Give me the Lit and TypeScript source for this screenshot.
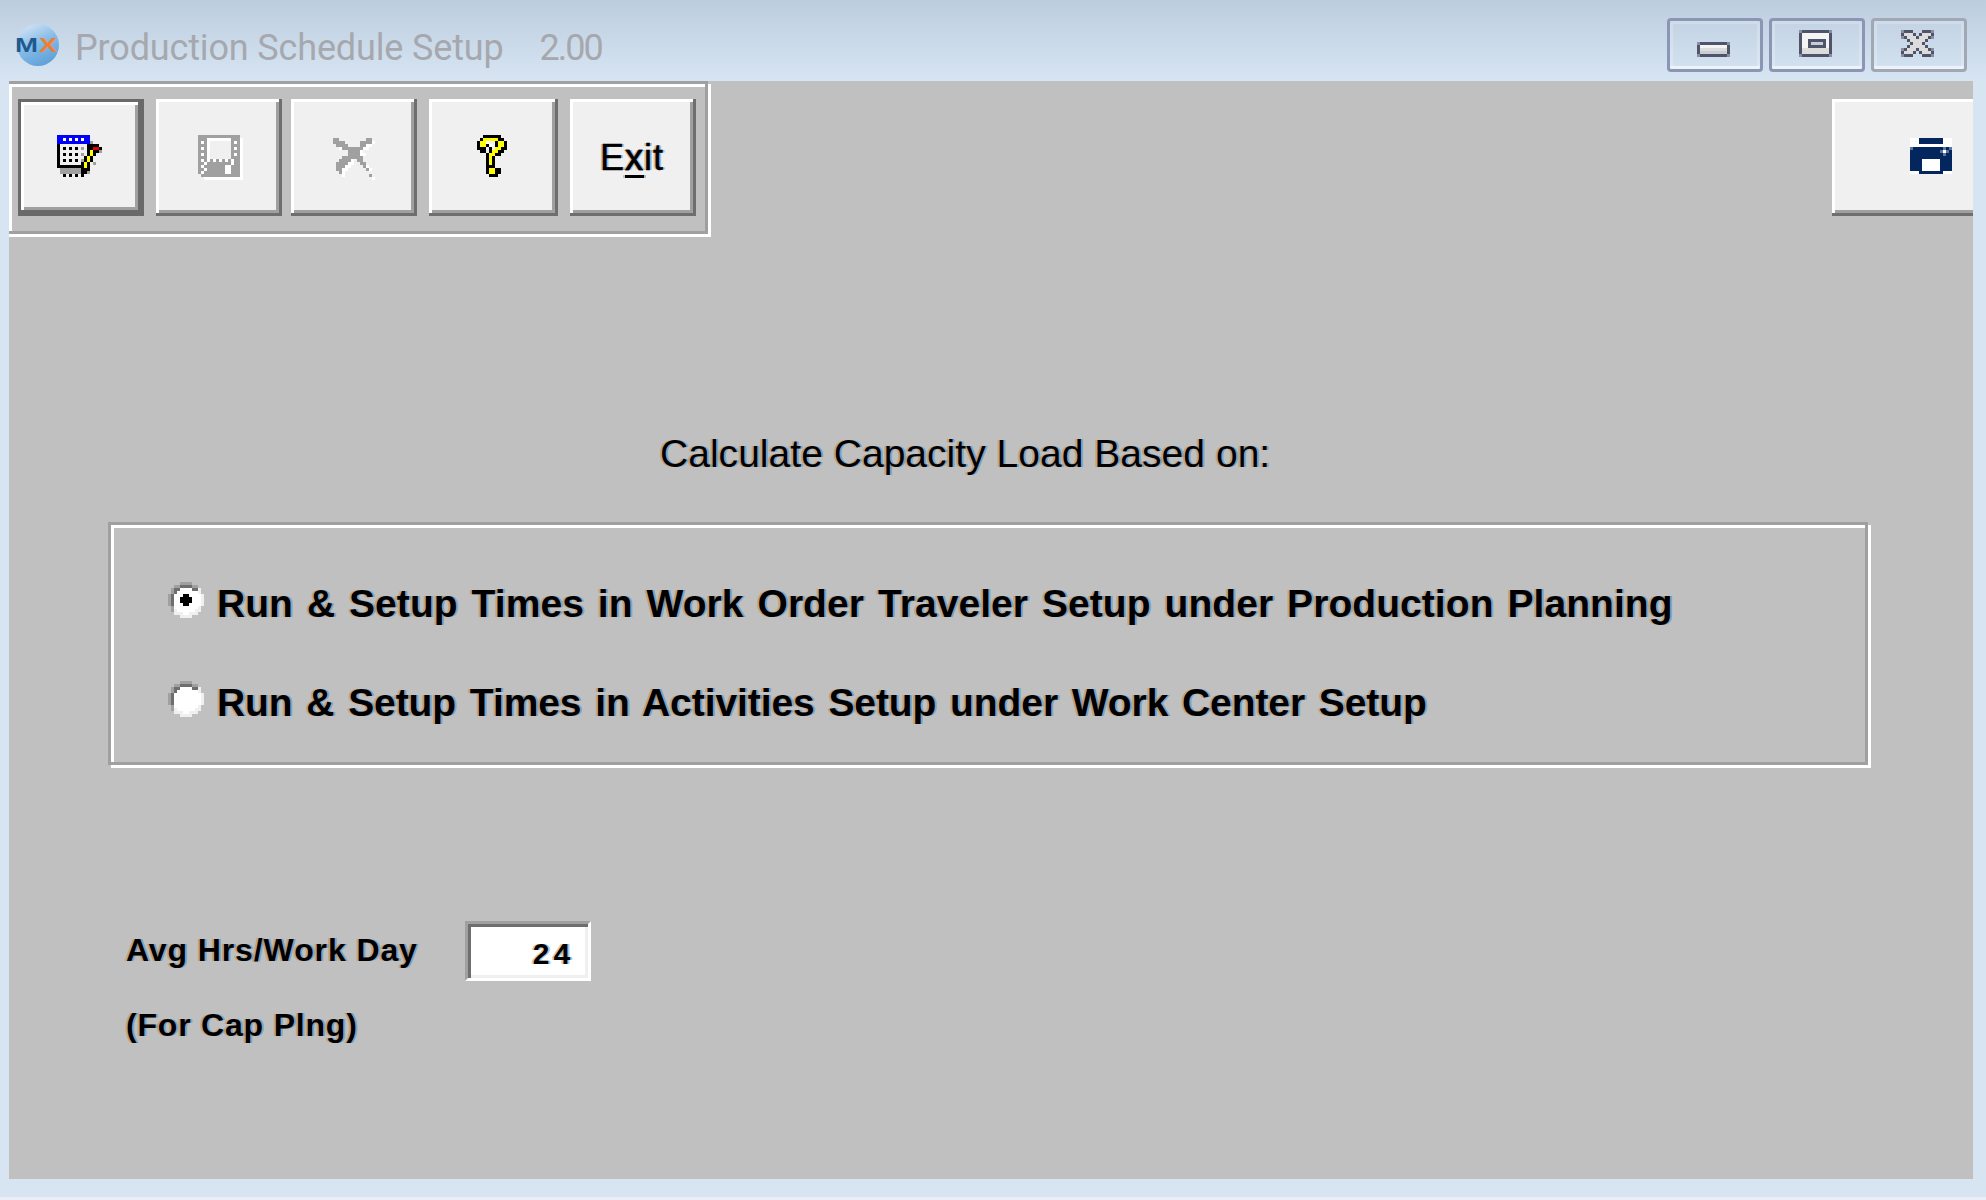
import { LitElement, html, css, svg } from "lit";
import { customElement } from "lit/decorators.js";

// every icon is a 3x upscaled bitmap, so they are stored as rows of pixels
const COLORS: Record<string, string> = {
  b: "#0000ff",
  w: "#ffffff",
  k: "#000000",
  g: "#a0a0a0",
  d: "#6e6e6e",
  l: "#f0f0f0",
  y: "#ffff00",
  r: "#e00000",
  n: "#03265f",
  m: "#5a77a0",
  s: "#50546a",
  e: "#8a8ea0",
  f: "#dcdcdc",
  h: "#f4f4f4",
  j: "#c8ccd4",
};

function pixels(rows: string[]) {
  const w = rows[0].length;
  const h = rows.length;
  const rects = [];
  for (let y = 0; y < h; y++) {
    let x = 0;
    while (x < w) {
      const c = rows[y][x];
      let end = x + 1;
      while (end < w && rows[y][end] === c) end++;
      if (c && c !== ".") {
        rects.push(svg`<rect x=${x} y=${y} width=${end - x} height="1" fill=${COLORS[c]}></rect>`);
      }
      x = end;
    }
  }
  return html`<svg class="px" width=${w * 3} height=${h * 3} viewBox="0 0 ${w} ${h}" shape-rendering="crispEdges">${rects}</svg>`;
}

const EDIT = [
  "bbbbbbbbbbb....",
  "bbwbwbwbwbb....",
  "bbbbbbbbbbbg...",
  "k.........kkkk.",
  "k.k.k.k.g.kkrrk",
  "k.........kykkg",
  "k.k.k.k.g.kyk..",
  "k........kyk...",
  "k.k.k.k.gkyk...",
  "k.......kyk.g..",
  "kkkkkkkkkyk....",
  ".gggggggkkk....",
  ".gggggggkkg....",
  "..k.k.k.k......",
];

const SAVE = [
  "gggggggggggggg.",
  "gggwwwwwwwwgggw",
  "gwgw.......gwgw",
  "gggw.......gggw",
  "gwgw.......gwgw",
  "gggw.......gggw",
  "gwgw.......gwgw",
  "gggw.......gggw",
  "gwgwgwgwgwgwggw",
  "ggwggggggggwggw",
  "gwgggggggwwgggw",
  "ggwggggggwwgggw",
  "gwgggggggwwgggw",
  ".gggggggggggggw",
  "..wwwwwwwwwwwww",
];

const CROSS = [
  "gg.........gg.",
  "gggg.....ggggw",
  ".gggg....ggww.",
  "..wgggggggww..",
  ".....ggggw....",
  ".....ggggww...",
  "...ggggggg....",
  "..ggggw.gg....",
  ".ggggww..gg...",
  ".gggww....gw..",
  ".ggww......gw.",
  "..gw..........",
  "...w........g.",
  ".............w",
];

const HELP = [
  "..kkkkkk..",
  ".kyyyyykk.",
  "kyyw..kyyk",
  "kyykw.kyyk",
  "kkk.k.yykk",
  ".kk.kyykk.",
  "...kyykk..",
  "...kyk....",
  "...kyk....",
  "...kyk....",
  "...kkk....",
  "...kyykk..",
  "...kyykk..",
  "....kkk...",
];

const PRINT = [
  "wwwnnnnnnnnwww",
  "wwwnnnnnnnnwww",
  "wwwwwwwwwwwwww",
  "mnnnnnnnnnnmnm",
  "nnnnnnnnnnmwmn",
  "nnnnnnnnnnnmnn",
  "nnnnnnnnnnnnnn",
  "nnnnwwwwwwnnnn",
  "nnnnwwwwwwnnnn",
  "nnnnwwwwwwnnnn",
  "nnnnwwwwwwnnnn",
  "wwwnnnnnnnnwww",
];

const RADIO_OFF = [
  "....gggg....",
  "..ggddddgg..",
  ".gddwwwwddl.",
  ".gdwwwwwwwl.",
  "gdwwwwwwwwwl",
  "gdwwwwwwwwwl",
  "gdwwwwwwwwwl",
  "gdwwwwwwwwwl",
  ".gwwwwwwwwl.",
  ".glwwwwwwll.",
  "..lllwwlll..",
  "....llll....",
];

const RADIO_ON = [
  "....gggg....",
  "..ggddddgg..",
  ".gddwwwwddl.",
  ".gdwwwwwwwl.",
  "gdwwwkkwwwwl",
  "gdwwkkkkwwwl",
  "gdwwkkkkwwwl",
  "gdwwwkkwwwwl",
  ".gwwwwwwwwl.",
  ".glwwwwwwll.",
  "..lllwwlll..",
  "....llll....",
];

const WIN_MIN = [
  "essssssssse",
  "shhhhhhhhhs",
  "sfffffffffs",
  "sjjjjjjjjjs",
  "essssssssse",
];

const WIN_MAX = [
  "essssssssse",
  "shhhhhhhhhs",
  "shhhhhhhhhs",
  "shhsssssshs",
  "shhsjjjjshs",
  "shhsssssshs",
  "sfffffffffs",
  "sfffffffffs",
  "essssssssse",
];

const WIN_CLOSE = [
  "esss...ssse",
  "sfffs.sfffs",
  "esfffsfffse",
  "..sfffffs..",
  "...sfffs...",
  "..sfffffs..",
  "esfffsfffse",
  "sfffs.sfffs",
  "esss...ssse",
];

@customElement("app-root")
export class AppRoot extends LitElement {
  static styles = css`
    :host {
      display: block;
      width: 1986px;
      height: 1200px;
      background: #d7e4f2;
      font-family: "Liberation Sans", Arial, sans-serif;
      color: #000;
      overflow: hidden;
    }
    .px {
      display: block;
      flex: none;
    }

    .titlebar {
      height: 81px;
      display: flex;
      align-items: flex-start;
      background: linear-gradient(#bccdde, #d7e5f3);
      box-sizing: border-box;
      padding: 0 19px 0 15px;
    }
    .logo {
      margin-top: 23px;
      flex: none;
    }
    .title {
      margin: 26px 0 0 15px;
      font: 400 36px/44px Roboto, sans-serif;
      letter-spacing: -0.15px;
      color: #a6a8ae;
      white-space: pre;
    }
    .version {
      margin-left: 36px;
      letter-spacing: -2px;
    }
    .winbtns {
      margin-left: auto;
      margin-top: 18px;
      display: flex;
      gap: 6px;
    }
    .winbtn {
      width: 96px;
      height: 54px;
      box-sizing: border-box;
      border: 3px solid #8a96b4;
      border-radius: 4px;
      box-shadow: inset 0 -3px 0 rgba(255, 255, 255, 0.5), inset 0 0 0 3px rgba(255, 255, 255, 0.2);
      display: flex;
      justify-content: center;
      align-items: flex-end;
      padding: 0 3px 12px 0;
    }
    .winbtn.off {
      border-color: #a0a8b4;
    }

    .client {
      margin: 0 13px 0 9px;
      height: 1098px;
      background: #c0c0c0;
      overflow: hidden;
    }
    .bottomline {
      margin-top: 18px;
      height: 3px;
      background: #e9eef7;
    }
    .top {
      display: flex;
      justify-content: space-between;
      align-items: flex-start;
    }

    /* toolbar sits half outside the client area, its left groove line is cut off */
    .toolbar {
      margin-left: -3px;
      width: 702px;
      height: 153px;
      box-sizing: border-box;
      border: 3px solid #a0a0a0;
      box-shadow: 3px 3px 0 #fff, inset 3px 3px 0 #fff;
      padding: 15px 0 0 9px;
      display: flex;
    }
    .btn {
      flex: none;
      width: 126px;
      height: 117px;
      box-sizing: border-box;
      background: #f0f0f0;
      box-shadow: inset -3px -3px 0 #6e6e6e, inset 3px 3px 0 #fff, inset -6px -6px 0 #a0a0a0;
      margin-right: 12px;
    }
    .btn.focus {
      box-shadow: inset 0 0 0 3px #696969, inset -6px -6px 0 #696969, inset 6px 6px 0 #fff, inset -9px -9px 0 #a0a0a0;
      padding: 36px 0 0 39px;
    }
    .btn.save {
      padding: 36px 0 0 42px;
      margin-right: 9px;
    }
    .btn.cancel {
      padding: 39px 0 0 42px;
    }
    .btn.help {
      width: 129px;
      padding: 36px 0 0 48px;
    }
    .btn.exit {
      margin-right: 0;
      padding: 41px 0 0 30px;
      font-size: 36px;
      line-height: 36px;
      letter-spacing: 1px;
      -webkit-text-stroke: 0.5px #000;
    }
    .btn.exit u {
      text-decoration-thickness: 3px;
      text-underline-offset: 5px;
    }
    .btn.print {
      width: 160px;
      margin: 18px -19px 0 0;
      padding: 39px 0 0 78px;
    }

    .fringe {
      text-shadow: -2px 0 rgba(190, 130, 60, 0.45), 2px 0 rgba(50, 130, 200, 0.45);
    }
    .heading {
      margin: 196px 0 0 651px;
      font-size: 39px;
      line-height: 48px;
      letter-spacing: 0.03px;
      white-space: nowrap;
    }
    .group {
      margin: 44px 0 0 99px;
      width: 1760px;
      height: 243px;
      box-sizing: border-box;
      border: 3px solid #a0a0a0;
      box-shadow: 3px 3px 0 #fff, inset 3px 3px 0 #fff;
      padding: 51px 0 0 57px;
      display: flex;
      flex-direction: column;
      gap: 51px;
    }
    .radio {
      display: flex;
      align-items: center;
      gap: 13px;
      height: 48px;
      font-size: 39px;
      font-weight: 700;
      letter-spacing: 0.065px;
      word-spacing: 3px;
      white-space: nowrap;
    }
    .radio.tight {
      letter-spacing: -0.08px;
    }
    .radio span {
      padding-top: 7px;
    }
    .hours {
      margin: 156px 0 0 117px;
      display: flex;
      align-items: center;
      font-size: 32px;
      font-weight: 700;
      letter-spacing: 0.9px;
    }
    .hours label {
      width: 339px;
      flex: none;
      margin-bottom: 1px;
    }
    .hours input {
      width: 126px;
      height: 60px;
      box-sizing: border-box;
      border: 3px solid;
      border-color: #a0a0a0 #fff #fff #a0a0a0;
      box-shadow: inset 3px 3px 0 #6e6e6e, inset -3px -3px 0 #f0f0f0;
      background: #fff;
      outline: none;
      text-align: right;
      padding: 10px 14px 0 0;
      font: 700 30px "Liberation Mono", monospace;
      letter-spacing: 3px;
      color: #000;
    }
    .note {
      margin: 26px 0 0 117px;
      font-size: 32px;
      line-height: 36px;
      font-weight: 700;
      letter-spacing: 0.8px;
    }
  `;

  render() {
    return html`
      <div class="titlebar">
        <svg class="logo" width="45" height="45" viewBox="0 0 45 45">
          <defs>
            <linearGradient id="globe" x1="0.2" y1="0" x2="0.7" y2="1">
              <stop offset="0" stop-color="#d4e4f6"></stop>
              <stop offset="0.5" stop-color="#86bae6"></stop>
              <stop offset="1" stop-color="#5c9fd8"></stop>
            </linearGradient>
          </defs>
          <circle cx="23" cy="22" r="21" fill="url(#globe)"></circle>
          <text x="0" y="29" font-family="Liberation Sans" font-weight="700" font-size="20" textLength="23" lengthAdjust="spacingAndGlyphs" fill="#1d5a8e">M</text>
          <text x="24" y="29" font-family="Liberation Sans" font-weight="700" font-size="20" textLength="18" lengthAdjust="spacingAndGlyphs" fill="#f08030">X</text>
        </svg>
        <div class="title">Production Schedule Setup<span class="version">2.00</span></div>
        <div class="winbtns">
          <div class="winbtn">${pixels(WIN_MIN)}</div>
          <div class="winbtn">${pixels(WIN_MAX)}</div>
          <div class="winbtn off">${pixels(WIN_CLOSE)}</div>
        </div>
      </div>
      <div class="client">
        <div class="top">
          <div class="toolbar">
            <div class="btn focus">${pixels(EDIT)}</div>
            <div class="btn save">${pixels(SAVE)}</div>
            <div class="btn cancel">${pixels(CROSS)}</div>
            <div class="btn help">${pixels(HELP)}</div>
            <div class="btn exit fringe">E<u>x</u>it</div>
          </div>
          <div class="btn print">${pixels(PRINT)}</div>
        </div>
        <div class="heading fringe">Calculate Capacity Load Based on:</div>
        <div class="group">
          <div class="radio">
            ${pixels(RADIO_ON)}
            <span class="fringe">Run &amp; Setup Times in Work Order Traveler Setup under Production Planning</span>
          </div>
          <div class="radio tight">
            ${pixels(RADIO_OFF)}
            <span class="fringe">Run &amp; Setup Times in Activities Setup under Work Center Setup</span>
          </div>
        </div>
        <div class="hours">
          <label class="fringe">Avg Hrs/Work Day</label>
          <input class="fringe" value="24" />
        </div>
        <div class="note fringe">(For Cap Plng)</div>
      </div>
      <div class="bottomline"></div>
    `;
  }
}
